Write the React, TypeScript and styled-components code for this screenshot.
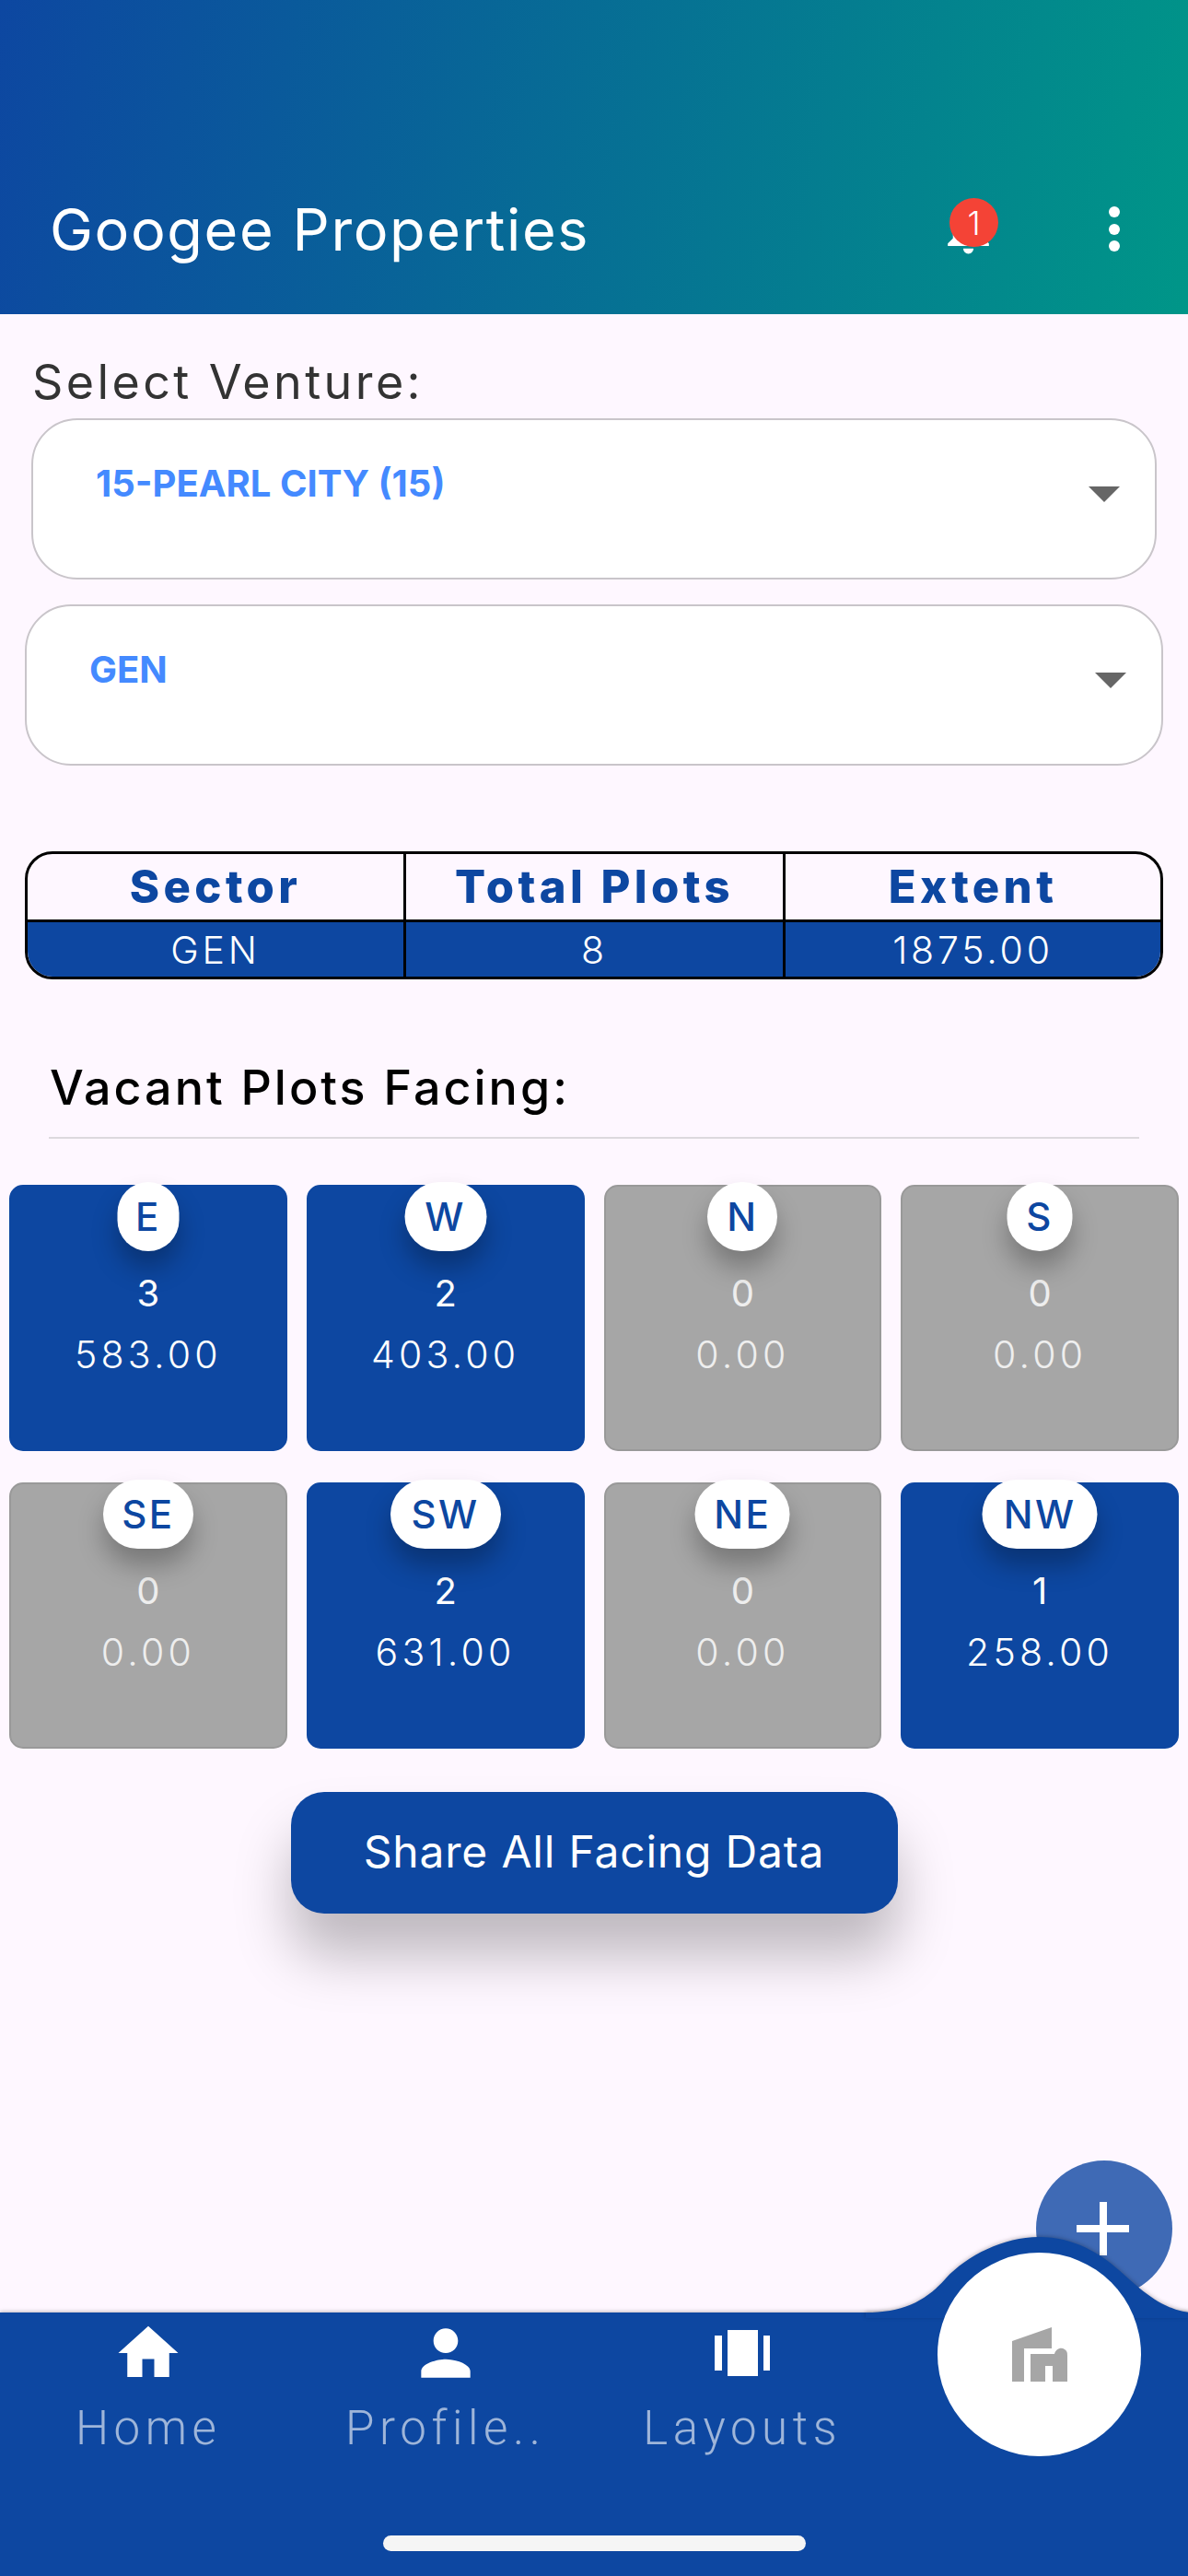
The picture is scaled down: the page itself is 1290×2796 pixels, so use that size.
import * as React from 'react';
import styled, { createGlobalStyle } from 'styled-components';
import { MdHome, MdNotifications, MdPerson } from 'react-icons/md';

const BLUE = '#0d47a1';

const GlobalStyle = createGlobalStyle`
  html, body {
    margin: 0;
    padding: 0;
    background: #fef7ff;
  }
  * {
    box-sizing: border-box;
  }
`;

interface Facing {
  label: string;
  count: number;
  extent: string;
  badgeWidth: number;
}

const facings: Facing[] = [
  { label: 'E', count: 3, extent: '583.00', badgeWidth: 67 },
  { label: 'W', count: 2, extent: '403.00', badgeWidth: 89 },
  { label: 'N', count: 0, extent: '0.00', badgeWidth: 76 },
  { label: 'S', count: 0, extent: '0.00', badgeWidth: 71 },
  { label: 'SE', count: 0, extent: '0.00', badgeWidth: 98 },
  { label: 'SW', count: 2, extent: '631.00', badgeWidth: 120 },
  { label: 'NE', count: 0, extent: '0.00', badgeWidth: 103 },
  { label: 'NW', count: 1, extent: '258.00', badgeWidth: 125 },
];

const CarouselIcon = () => (
  <svg width="60" height="50" viewBox="0 0 60 50" fill="#fff">
    <rect x="0" y="6" width="8" height="38" />
    <rect x="14" y="0" width="33" height="50" />
    <rect x="53" y="6" width="7" height="38" />
  </svg>
);

const BuildingIcon = () => (
  <svg width="60" height="60" viewBox="0 0 60 60" fill="#a6a6a6">
    <path d="M0 15 L43 0 V23 H13 V59 H0 Z" />
    <path d="M20 29 H46 C47 24 53 21 57 24 C60 26 60 28 60 31 V59 H44 V42 H36 V59 H20 Z" />
  </svg>
);

const App: React.FC = () => (
  <Page>
    <GlobalStyle />
    <Header>
      <Title>Googee Properties</Title>
      <BellWrap>
        <MdNotifications size={67} color="#fff" />
        <NotifBadge>1</NotifBadge>
      </BellWrap>
      <MoreDots>
        <Dot />
        <Dot />
        <Dot />
      </MoreDots>
    </Header>
    <Main>
      <SelectLabel>Select Venture:</SelectLabel>
      <Dropdown $inset={34} $top={0}>
        <DropdownText>15-PEARL CITY (15)</DropdownText>
        <Caret />
      </Dropdown>
      <Dropdown $inset={27} $top={27}>
        <DropdownText>GEN</DropdownText>
        <Caret />
      </Dropdown>
      <SummaryTable>
        <HeadCell>Sector</HeadCell>
        <HeadCell>Total Plots</HeadCell>
        <HeadCell>Extent</HeadCell>
        <DataCell>GEN</DataCell>
        <DataCell>8</DataCell>
        <DataCell>1875.00</DataCell>
      </SummaryTable>
      <SectionTitle>Vacant Plots Facing:</SectionTitle>
      <Divider />
      <FacingGrid>
        {facings.map((f) => (
          <FacingCard key={f.label} $active={f.count > 0}>
            <FacingBadge $width={f.badgeWidth}>{f.label}</FacingBadge>
            <FacingCount>{f.count}</FacingCount>
            <FacingExtent>{f.extent}</FacingExtent>
          </FacingCard>
        ))}
      </FacingGrid>
      <ShareButton>Share All Facing Data</ShareButton>
    </Main>
    <BottomNav>
      <AddFab>
        <PlusH />
        <PlusV />
      </AddFab>
      <NavBump viewBox="0 0 352 90" width="352" height="90">
        <path
          d="M0 84 C40 84 65 72 87 47 C110 22 150 2 188 2 C226 2 255 20 275 38 C300 60 320 80 352 84 V90 H0 Z"
          fill={BLUE}
        />
      </NavBump>
      <HomeCircle>
        <BuildingIcon />
      </HomeCircle>
      <Tab>
        <TabIcon>
          <MdHome size={78} color="#fff" />
        </TabIcon>
        <TabLabel>Home</TabLabel>
      </Tab>
      <Tab>
        <TabIcon>
          <MdPerson size={80} color="#fff" />
        </TabIcon>
        <TabLabel>Profile..</TabLabel>
      </Tab>
      <Tab>
        <TabIcon>
          <CarouselIcon />
        </TabIcon>
        <TabLabel>Layouts</TabLabel>
      </Tab>
      <Tab />
      <HomeIndicator />
    </BottomNav>
  </Page>
);

const Page = styled.div`
  width: 1290px;
  height: 2796px;
  display: flex;
  flex-direction: column;
  overflow: hidden;
  background: #fef7ff;
  font-family: Inter, 'Open Sans', sans-serif;
`;

const Header = styled.header`
  height: 341px;
  flex: none;
  display: flex;
  align-items: center;
  padding: 156px 74px 0 54px;
  background: linear-gradient(100deg, ${BLUE} 0%, #009688 100%);
`;

const Title = styled.h1`
  flex: 1;
  margin: 0;
  font-size: 63px;
  font-weight: 400;
  color: #fff;
  letter-spacing: 1.6px;
`;

const BellWrap = styled.div`
  position: relative;
  width: 67px;
  height: 67px;
  margin-right: 119px;
  margin-top: -2px;
`;

const NotifBadge = styled.div`
  position: absolute;
  left: 13px;
  top: 1px;
  width: 53px;
  height: 53px;
  border-radius: 50%;
  background: #f44336;
  color: #fff;
  font-size: 36px;
  font-weight: 300;
  display: flex;
  align-items: center;
  justify-content: center;
`;

const MoreDots = styled.div`
  display: flex;
  flex-direction: column;
  gap: 6.5px;
`;

const Dot = styled.span`
  width: 12px;
  height: 12px;
  border-radius: 50%;
  background: #fff;
`;

const Main = styled.main`
  flex: 1;
  display: flex;
  flex-direction: column;
`;

const SelectLabel = styled.div`
  margin: 50px 0 0 35px;
  height: 63px;
  line-height: 48px;
  font-size: 52px;
  color: #333;
  letter-spacing: 3.4px;
`;

const Dropdown = styled.div<{ $inset: number; $top: number }>`
  position: relative;
  height: 175px;
  margin: ${(p) => p.$top}px ${(p) => p.$inset}px 0;
  padding: 46px 0 0 68px;
  background: #fff;
  border: 2px solid #c9c5ca;
  border-radius: 50px;
`;

const DropdownText = styled.div`
  font-size: 40px;
  line-height: 46px;
  font-weight: 700;
  color: #448aff;
`;

const Caret = styled.span`
  position: absolute;
  right: 38px;
  top: 72px;
  width: 0;
  height: 0;
  border-left: 17px solid transparent;
  border-right: 17px solid transparent;
  border-top: 17px solid #666;
`;

const SummaryTable = styled.div`
  margin: 93px 27px 0;
  display: grid;
  grid-template-columns: 408px 412px 1fr;
  grid-template-rows: 74px 1fr;
  height: 139px;
  border: 3px solid #000;
  border-radius: 30px;
  overflow: hidden;
`;

const HeadCell = styled.div`
  display: flex;
  align-items: center;
  justify-content: center;
  font-size: 49px;
  font-weight: 800;
  letter-spacing: 4.4px;
  color: ${BLUE};
  border-bottom: 3px solid #000;
  & + & {
    border-left: 3px solid #000;
  }
`;

const DataCell = styled.div`
  display: flex;
  align-items: center;
  justify-content: center;
  font-size: 41px;
  font-weight: 300;
  letter-spacing: 3.8px;
  color: #fff;
  background: ${BLUE};
  & + & {
    border-left: 3px solid #000;
  }
`;

const SectionTitle = styled.div`
  margin: 90px 0 0 54px;
  height: 81px;
  font-size: 52px;
  line-height: 56px;
  font-weight: 500;
  color: #000;
  letter-spacing: 3px;
`;

const Divider = styled.div`
  margin: 0 53px;
  height: 2px;
  background: #ddd9de;
`;

const FacingGrid = styled.div`
  margin-top: 50px;
  padding: 0 10px;
  display: grid;
  grid-template-columns: repeat(4, 1fr);
  grid-auto-rows: 289px;
  column-gap: 21px;
  row-gap: 34px;
`;

const FacingCard = styled.div<{ $active: boolean }>`
  position: relative;
  display: flex;
  flex-direction: column;
  align-items: center;
  padding-top: 92px;
  border-radius: 15px;
  background: ${(p) => (p.$active ? BLUE : '#a6a6a6')};
  border: 2px solid ${(p) => (p.$active ? BLUE : '#999')};
  color: ${(p) => (p.$active ? '#fff' : '#eee')};
`;

const FacingBadge = styled.div<{ $width: number }>`
  position: absolute;
  top: -5px;
  left: 50%;
  transform: translateX(-50%);
  width: ${(p) => p.$width}px;
  height: 75px;
  border-radius: 38px;
  display: flex;
  align-items: center;
  justify-content: center;
  background: #fff;
  color: ${BLUE};
  font-size: 42px;
  font-weight: 500;
  letter-spacing: 2.5px;
  box-shadow: 0 18px 28px rgba(0, 0, 0, 0.28);
`;

const FacingCount = styled.div`
  font-size: 40px;
  line-height: 48px;
`;

const FacingExtent = styled.div`
  margin-top: 18px;
  font-size: 41px;
  line-height: 48px;
  font-weight: 300;
  letter-spacing: 4.2px;
`;

const ShareButton = styled.button`
  align-self: center;
  margin-top: 47px;
  width: 659px;
  height: 132px;
  border: 0;
  border-radius: 36px;
  padding-bottom: 4px;
  background: ${BLUE};
  color: #fff;
  font-family: inherit;
  font-size: 48px;
  letter-spacing: 0.8px;
  box-shadow: 0 46px 60px rgba(0, 0, 0, 0.25);
`;

const BottomNav = styled.nav`
  position: relative;
  height: 286px;
  flex: none;
  display: grid;
  grid-template-columns: repeat(4, 1fr);
  background: ${BLUE};
  box-shadow: 0 -1px 4px rgba(0, 0, 0, 0.25);
`;

const AddFab = styled.div`
  position: absolute;
  left: 1125px;
  top: -165px;
  width: 148px;
  height: 148px;
  border-radius: 50%;
  background: #3f6ab5;
`;

const PlusH = styled.span`
  position: absolute;
  left: 44px;
  top: 70px;
  width: 57px;
  height: 8px;
  background: #fff;
`;

const PlusV = styled.span`
  position: absolute;
  left: 69px;
  top: 45px;
  width: 8px;
  height: 58px;
  background: #fff;
`;

const NavBump = styled.svg`
  position: absolute;
  left: 940px;
  top: -84px;
  overflow: visible;
  filter: drop-shadow(0 -1px 2px rgba(0, 0, 0, 0.25));
`;

const HomeCircle = styled.div`
  position: absolute;
  left: 1018px;
  top: -65px;
  width: 221px;
  height: 221px;
  border-radius: 50%;
  background: #fff;
  display: flex;
  align-items: center;
  justify-content: center;
`;

const Tab = styled.div`
  display: flex;
  flex-direction: column;
  align-items: center;
  padding-top: 4px;
`;

const TabIcon = styled.div`
  height: 80px;
  display: flex;
  align-items: center;
  justify-content: center;
`;

const TabLabel = styled.div`
  margin-top: 13px;
  font-family: Roboto, sans-serif;
  font-size: 51px;
  line-height: 58px;
  font-weight: 300;
  letter-spacing: 5.6px;
  color: rgba(255, 255, 255, 0.6);
`;

const HomeIndicator = styled.div`
  position: absolute;
  left: 416px;
  bottom: 27px;
  width: 459px;
  height: 17px;
  border-radius: 9px;
  background: #f5f5f5;
`;

export default App;
